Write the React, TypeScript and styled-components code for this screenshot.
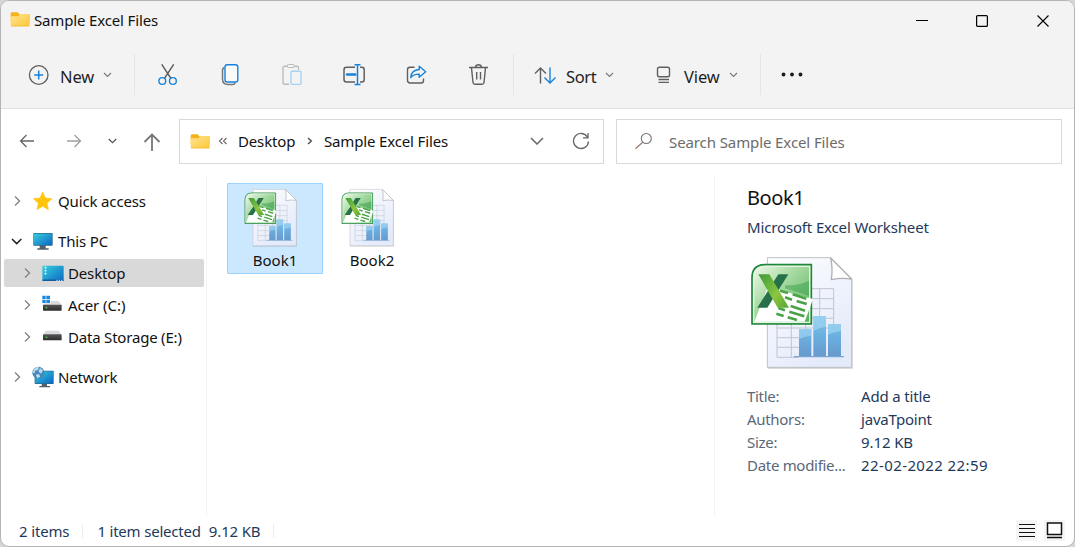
import React from "react";
import styled, { createGlobalStyle } from "styled-components";

const Global = createGlobalStyle`
  * { box-sizing: border-box; }
  body { margin: 0; background: #d6d6d6; overflow: hidden; }
`;

const Window = styled.div`
  width: 1075px;
  height: 547px;
  display: flex;
  flex-direction: column;
  background: #fff;
  border: 1px solid #b4b4b4;
  border-radius: 9px;
  overflow: hidden;
  font-family: "Noto Sans", "Open Sans", sans-serif;
  font-size: 15px;
  line-height: 20px;
  color: #111;
`;

const Label = styled.span<{ $ls?: number; $size?: number; $color?: string; $w?: number; $drop?: number }>`
  display: block;
  flex: none;
  white-space: nowrap;
  width: ${(p) => (p.$w ? `${p.$w}px` : "auto")};
  font-size: ${(p) => p.$size ?? 15}px;
  letter-spacing: ${(p) => p.$ls ?? -0.15}px;
  color: ${(p) => p.$color ?? "inherit"};
  padding-top: ${(p) => p.$drop ?? 0}px;
`;

const Svg = styled.svg<{ $ml?: number }>`
  display: block;
  flex: none;
  fill: none;
  margin-left: ${(p) => p.$ml ?? 0}px;
`;

const Inset = styled.div<{ $ml: number }>`
  flex: none;
  margin-left: ${(p) => p.$ml}px;
`;

type Box = [number, number, number, number];
const Glyph = ({ box, scale = 1, ml, children }: { box: Box; scale?: number; ml?: number; children: React.ReactNode }) => (
  <Svg $ml={ml} width={box[2] * scale} height={box[3] * scale} viewBox={box.join(" ")}>
    {children}
  </Svg>
);

const TitleBar = styled.header`
  display: flex;
  align-items: center;
  height: 39px;
  padding-left: 9px;
  background: #f3f3f3;
  color: #111;
`;
const Title = styled.div`
  display: flex;
  align-items: center;
  gap: 4px;
  flex: 1;
  padding-bottom: 2px;
`;
const CaptionButton = styled.div<{ $w?: number }>`
  width: ${(p) => p.$w ?? 60}px;
  height: 38px;
  display: grid;
  place-items: center;
`;

const Toolbar = styled.div`
  display: flex;
  align-items: center;
  height: 69px;
  background: #f3f3f3;
  border-bottom: 1px solid #e1e1e1;
  padding-top: 1px;
  color: #1f1f1f;
`;
const Command = styled.div<{ $w: number; $pl: number; $gap: number }>`
  display: flex;
  align-items: center;
  flex: none;
  width: ${(p) => p.$w}px;
  padding-left: ${(p) => p.$pl}px;
  gap: ${(p) => p.$gap}px;
`;
const IconButton = styled.div`
  width: 62px;
  display: grid;
  place-items: center;
`;
const Divider = styled.div<{ $mx?: string }>`
  width: 1px;
  height: 41px;
  background: #e5e5e5;
  margin: ${(p) => p.$mx ?? "0"};
`;

const NavRow = styled.div`
  display: flex;
  align-items: center;
  height: 66px;
  padding: 0 0 2px 10px;
`;
const Field = styled.div<{ $w: number; $mr?: number }>`
  display: flex;
  align-items: center;
  flex: none;
  width: ${(p) => p.$w}px;
  height: 45px;
  margin-right: ${(p) => p.$mr ?? 0}px;
  border: 1px solid #d9d9d9;
`;
const NavButton = styled.div<{ $w: number; $ml?: number }>`
  width: ${(p) => p.$w}px;
  margin-left: ${(p) => p.$ml ?? 0}px;
  display: grid;
  place-items: center;
`;

const Body = styled.div`
  display: flex;
  height: 341px;
`;
const Sidebar = styled.nav`
  width: 206px;
  border-right: 1px solid #f3f3f3;
  padding: 12px 2px 0 3px;
  display: flex;
  flex-direction: column;
  gap: 4px;
`;
const TreeRow = styled.div<{ $depth?: number; $selected?: boolean; $gap?: boolean }>`
  display: flex;
  align-items: center;
  height: 28px;
  padding-left: ${(p) => (p.$depth ? 18 : 8)}px;
  margin-top: ${(p) => (p.$gap ? 8 : 0)}px;
  border-radius: 2px;
  background: ${(p) => (p.$selected ? "#d9d9d9" : "transparent")};
`;
const TreeIcon = styled.div`
  width: 24px;
  margin-left: 8.5px;
  margin-right: 3.5px;
  display: flex;
  justify-content: center;
`;

const Files = styled.main`
  display: flex;
  gap: 1px;
  align-items: flex-start;
  width: 508px;
  padding: 8px 0 0 20px;
  border-right: 1px solid #f3f3f3;
`;
const FileTile = styled.div<{ $selected?: boolean }>`
  width: 96px;
  height: 91px;
  display: flex;
  flex-direction: column;
  align-items: center;
  padding-top: 4px;
  border-radius: 1px;
  border: 1px solid ${(p) => (p.$selected ? "#99d1ff" : "transparent")};
  background: ${(p) => (p.$selected ? "#cce8ff" : "transparent")};
`;
const FileArt = styled.div`
  margin-right: 8px;
  height: 62px;
`;

const Details = styled.aside`
  flex: 1;
  padding: 10px 0 0 32px;
`;
const Preview = styled.div`
  padding: 18px 0 14px 3px;
`;
const Property = styled.div`
  display: flex;
  height: 23px;
  align-items: center;
`;

const StatusBar = styled.footer`
  display: flex;
  align-items: center;
  height: 30px;
  padding: 0 2px 0 18px;
  color: #1e395b;
`;
const StatusDivider = styled.div<{ $m: string }>`
  width: 1px;
  height: 14px;
  background: #ededed;
  margin: ${(p) => p.$m};
`;
const ViewToggle = styled.div`
  width: 21px;
  height: 21px;
  margin-right: 7px;
  margin-bottom: 2px;
  background: #f5f5f5;
  display: grid;
  place-items: center;
`;
const Spacer = styled.div`
  flex: 1;
`;

const Defs = styled.svg`
  display: block;
  width: 0;
  height: 0;
`;
const Gradients = () => (
  <Defs>
    <defs>
      <linearGradient id="folder" x1="0" y1="0" x2="1" y2="1">
        <stop offset="0" stopColor="#ffe395" /><stop offset="1" stopColor="#fdc934" />
      </linearGradient>
      <linearGradient id="screen" x1="0" y1="0" x2="1" y2="1">
        <stop offset="0" stopColor="#36cfdc" /><stop offset="1" stopColor="#0c66c4" />
      </linearGradient>
      <linearGradient id="disk" x1="0" y1="0" x2="0" y2="1">
        <stop offset="0" stopColor="#555" /><stop offset="1" stopColor="#2c2c2c" />
      </linearGradient>
      <linearGradient id="page" x1="0" y1="0" x2="0.6" y2="1">
        <stop offset="0" stopColor="#ffffff" /><stop offset="0.45" stopColor="#f2f5fd" /><stop offset="1" stopColor="#e3eafa" />
      </linearGradient>
      <linearGradient id="sheet" x1="0" y1="0" x2="1" y2="1">
        <stop offset="0" stopColor="#f4fbf1" /><stop offset="0.4" stopColor="#a8dba2" /><stop offset="1" stopColor="#4fae55" />
      </linearGradient>
      <linearGradient id="bar" x1="0" y1="0" x2="0" y2="1">
        <stop offset="0" stopColor="#7dc3ea" /><stop offset="0.5" stopColor="#6bafdf" /><stop offset="1" stopColor="#6699cc" />
      </linearGradient>
      <linearGradient id="cross" x1="0" y1="0" x2="1" y2="1">
        <stop offset="0" stopColor="#3c9a3a" /><stop offset="0.6" stopColor="#8cc63f" /><stop offset="1" stopColor="#55a636" />
      </linearGradient>
    </defs>
  </Defs>
);

const FolderIcon = () => (
  <Glyph box={[28, 32, 60, 50]} scale={1 / 3}>
    <path d="M30 40q0-4 4-4h17l5 6h28q3 0 3 3v20H30z" fill="#f5b31a" />
    <path d="M30 48h23l6-7h25q3 0 3 3v31q0 3-3 3H33q-3 0-3-3z" fill="url(#folder)" />
    <path d="M31 77h55" stroke="#f1b52b" strokeWidth="2" />
  </Glyph>
);

const SmallChevron = () => (
  <Glyph box={[0, 0, 9, 6]}><path d="M1 1l3.5 3.4L8 1" stroke="#777" strokeWidth="1.1" /></Glyph>
);
const TreeChevron = ({ open }: { open?: boolean }) =>
  open ? (
    <Glyph box={[0, 0, 11, 12]} ml={-1}><path d="M1 4l4.7 4.6L10.400 4" stroke="#222" strokeWidth="1.5" /></Glyph>
  ) : (
    <Glyph box={[0, 0, 10, 12]}><path d="M3 1.500L7.500 6l-4.500 4.500" stroke="#858585" strokeWidth="1.4" /></Glyph>
  );

const Monitor = () => (
  <Glyph box={[98, 168, 60, 56]} scale={1 / 3}>
    <path d="M118 207h18v10h9v4h-34v-4h7z" fill="#546069" />
    <rect x="99" y="171" width="58" height="38" rx="2" fill="#27698c" />
    <rect x="101" y="173" width="54" height="34" fill="url(#screen)" />
  </Glyph>
);
const DesktopIcon = () => (
  <Glyph box={[125, 268, 66, 50]} scale={1 / 3}>
    <rect x="126" y="270" width="64" height="48" rx="3" fill="url(#screen)" />
    <path d="M133 276h5m-5 9h5m-5 9h5" stroke="#e8feff" strokeWidth="5" />
    <path d="M127 314h62" stroke="#115a9e" strokeWidth="5" />
    <path d="M168 314h4m3 0h4m3 0h4" stroke="#d6ebff" strokeWidth="3" />
  </Glyph>
);
const Drive = ({ windows }: { windows?: boolean }) => (
  <Glyph box={[127, 358, 62, 60]} scale={1 / 3}>
    <g transform={windows ? "translate(0 -2)" : "translate(0 -9)"}>
      <path d="M139 378h38l9 12h-56z" fill="#d9dadd" />
      <rect x="130" y="389" width="56" height="18" rx="2" fill="url(#disk)" />
      <path d="M138 398h5" stroke="#45d84d" strokeWidth="4" />
    </g>
    {windows && <rect x="127" y="358" width="26" height="25" fill="#fff" />}
    {windows && <path d="M128 360h10v10h-10zM140 360h11v10h-11zM128 372h10v10h-10zM140 372h11v10h-11z" fill="#1588df" />}
  </Glyph>
);
const NetworkIcon = () => (
  <Glyph box={[95, 571, 66, 66]} scale={1 / 3}>
    <path d="M124 623h16v8h9v4h-32v-4h7z" fill="#51616c" />
    <rect x="103" y="585" width="57" height="40" rx="2" fill="#24688b" />
    <rect x="105" y="587" width="53" height="36" fill="url(#screen)" />
    <circle cx="114" cy="591" r="18" fill="#4386bb" />
    <path d="M101 580q8-8 15-5l-3 8-8 2-2 8-6-2zM119 577l9 7-5 10-9-6zM106 597l10-2 4 8-9 5z" fill="#b8d9e9" />
  </Glyph>
);
const Star = () => (
  <Glyph box={[98, 48, 58, 58]} scale={1 / 3}>
    <path d="M127 51l8 18 20 2-15 14 4 19-17-10-17 10 4-19-15-14 20-2z" fill="#ffc50d" stroke="#ffc50d" strokeWidth="2" strokeLinejoin="round" />
  </Glyph>
);

const ExcelFile = ({ scale }: { scale: number }) => (
  <Glyph box={[45, 240, 312, 345]} scale={scale / 3}>
    <path d="M99 251H289L353 316V581H99z" fill="#777" opacity=".35" />
    <path d="M97 248H287L350 312V577H97z" fill="url(#page)" stroke="#bfc1c5" strokeWidth="3" />
    <path d="M287 249L350 312q-32-5-61 2 5-35-2-65z" fill="#fff" stroke="#aeb0b3" strokeWidth="4" strokeLinejoin="round" />
    <path d="M126 341H296M126 371H296M126 401H296M126 430H296M126 459H296M126 488H200M126 517H200M126 547H190M126 440V547M169 440V547M212 341V547M254 341V430M296 341V450" stroke="#c0c4d2" strokeWidth="3" />
    <path d="M192 463h37v82h-37zM235 423h38v122h-38zM279 447h39v98h-39z" fill="url(#bar)" />
    <path d="M192 463h37v20q-20 0-37 9zM235 423h38v32q-20 3-38 13zM279 447h39v21q-22 3-39 11z" fill="#a6d9f4" opacity=".6" />
    <path d="M177 545H327" stroke="#7aa5d2" strokeWidth="4" />
    <path d="M51 447V309q0-40 40-40H229V447z" fill="url(#sheet)" stroke="#20863b" strokeWidth="5" />
    <path d="M56 442V311q0-37 37-37H224V442z" stroke="#e5f5e2" strokeWidth="4" />
    <path d="M150 331q46 0 72-14v45l-72-22z" fill="#2e9c45" opacity=".45" />
    <path d="M58 440l40-103 136 35-25 68z" fill="#fff" />
    <path d="M135 347l24 7m14 4l41 13M150 367l21 7m14 4l30 9M135 383l19 6m13 4l43 14M130 399l20 7m13 4l45 14M124 416l22 7m12 4l28 8" stroke="#4aa447" strokeWidth="8" />
    <path d="M130 298h30L97 398H67z" fill="#27714a" />
    <path d="M70 298h33l59 100h-34z" fill="url(#cross)" />
  </Glyph>
);

const dark = "#5f5f5f";
const blue = "#1682da";

const properties: [string, string, number][] = [
  ["Title:", "Add a title", -0.15],
  ["Authors:", "javaTpoint", -0.2],
  ["Size:", "9.12 KB", -0.1],
  ["Date modifie...", "22-02-2022 22:59", 0.4],
];

export default function App() {
  return (
    <>
      <Global />
      <Gradients />
      <Window>
        <TitleBar>
          <Title>
            <FolderIcon />
            <Label>Sample Excel Files</Label>
          </Title>
          <CaptionButton><Glyph box={[0, 0, 12, 12]}><path d="M0 5.500h12" stroke="#000" /></Glyph></CaptionButton>
          <CaptionButton><Glyph box={[0, 0, 12, 12]}><rect x=".6" y=".6" width="10.800" height="10.800" rx="1" stroke="#000" strokeWidth="1.200" /></Glyph></CaptionButton>
          <CaptionButton $w={62}><Glyph box={[0, 0, 12, 12]}><path d="M.5.5l11 11M11.500.5l-11 11" stroke="#000" strokeWidth="1.100" /></Glyph></CaptionButton>
        </TitleBar>

        <Toolbar>
          <Command $w={133} $pl={27} $gap={11}>
            <Glyph box={[28, 64, 21, 22]}>
              <circle cx="38.700" cy="75" r="9.300" stroke={dark} strokeWidth="1.300" />
              <path d="M38.700 70.500v9M34.200 75h9" stroke={blue} strokeWidth="1.500" />
            </Glyph>
            <Label $size={16.5} $ls={-0.1} $drop={5} $w={32}>New</Label>
            <SmallChevron />
          </Command>
          <Divider $mx="0 2px 0 0" />
          <IconButton>
            <Glyph box={[157, 64, 22, 22]}>
              <path d="M161.700 64.300l9.300 14.200M173.700 64.300l-9.300 14.200" stroke={dark} strokeWidth="1.400" />
              <circle cx="162.300" cy="81" r="3.400" stroke={blue} strokeWidth="1.400" />
              <circle cx="172.900" cy="81" r="3.400" stroke={blue} strokeWidth="1.400" />
            </Glyph>
          </IconButton>
          <IconButton>
            <Glyph box={[219, 64, 22, 22]}>
              <path d="M224.500 67.500q-2 .5-2 3v8.500q0 5.500 5.500 5.500h4.500q2 0 2.700-1.800" stroke="#777" strokeWidth="1.500" />
              <rect x="225" y="64.700" width="12.800" height="17.300" rx="2.200" fill="#fafafa" stroke={blue} strokeWidth="1.400" />
            </Glyph>
          </IconButton>
          <IconButton>
            <Glyph box={[281, 64, 22, 22]}>
              <path d="M289 84.300h-4.500q-1.500 0-1.500-1.500v-15q0-1.500 1.500-1.500h3M294.500 66.300h2.500q1.500 0 1.500 1.500v2" stroke="#bcbcbc" strokeWidth="1.400" />
              <rect x="287" y="64.500" width="7.500" height="3" rx="1.500" stroke="#bcbcbc" />
              <rect x="291" y="71.200" width="10" height="13.200" rx="1.200" stroke="#a8d2f2" strokeWidth="1.400" />
            </Glyph>
          </IconButton>
          <IconButton>
            <Glyph box={[343, 64, 23, 22]}>
              <path d="M355 67.200h-8.500q-2.500 0-2.500 2.500v9.800q0 2.500 2.500 2.500h8.500M360 67.200h1.700q2.500 0 2.500 2.500v9.800q0 2.500-2.500 2.500H360" stroke={dark} strokeWidth="1.500" />
              <path d="M347 74.500h8.300" stroke={blue} strokeWidth="2.400" strokeLinecap="round" />
              <path d="M354.500 64.700h6M354.500 84.500h6M357.500 65v19" stroke={blue} strokeWidth="1.500" />
            </Glyph>
          </IconButton>
          <IconButton>
            <Glyph box={[405, 64, 22, 22]}>
              <path d="M414.500 67.300H410q-2.500 0-2.500 2.500v10.500q0 2.700 2.700 2.700H421q2.500 0 2.500-2.500v-2" stroke={dark} strokeWidth="1.400" />
              <path d="M419.200 66.300l6.500 5.500-6.500 5.500v-3.200q-5.300-.2-8.500 3.400.7-7.500 8.500-8z" stroke={blue} strokeWidth="1.400" strokeLinejoin="round" />
            </Glyph>
          </IconButton>
          <IconButton>
            <Glyph box={[467, 63, 23, 23]}>
              <path d="M469 67.500h19M475.500 67q.4-2.300 3-2.300t3 2.300M471.500 68l1.500 14.500q.2 1.800 2 1.800h7q1.800 0 2-1.800l1.500-14.500M476.700 72v7.500M480.500 72v7.500" stroke={dark} strokeWidth="1.400" />
            </Glyph>
          </IconButton>
          <Divider $mx="0 0 0 4px" />
          <Command $w={138} $pl={20} $gap={9}>
            <Glyph box={[534, 66, 23, 18]}>
              <path d="M540.500 83.500V68M535 73.500l5.500-5.500 5.500 5.500" stroke={dark} strokeWidth="1.400" />
              <path d="M550 67.500V83M544.500 77.500L550 83l5.500-5.500" stroke={blue} strokeWidth="1.400" />
            </Glyph>
            <Label $size={16.5} $ls={-0.35} $drop={5} $w={30}>Sort</Label>
            <SmallChevron />
          </Command>
          <Command $w={108} $pl={3} $gap={12}>
            <Glyph box={[655, 67, 17, 18]}>
              <rect x="657.500" y="68.200" width="12" height="9.600" rx="1.800" stroke={dark} strokeWidth="1.400" />
              <path d="M658.500 80.500h10.500M658.500 83.300h10.500" stroke={dark} strokeWidth="1.300" />
            </Glyph>
            <Label $size={16.5} $ls={-0.1} $drop={5} $w={33}>View</Label>
            <SmallChevron />
          </Command>
          <Divider />
          <Command $w={60} $pl={19} $gap={0}>
            <Glyph box={[780, 72, 24, 5]}>
              <g fill="#1d1d1d"><circle cx="783.500" cy="74.500" r="1.900" /><circle cx="792" cy="74.500" r="1.900" /><circle cx="800.500" cy="74.500" r="1.900" /></g>
            </Glyph>
          </Command>
        </Toolbar>

        <NavRow>
          <NavButton $w={32}><Glyph box={[19, 134, 16, 14]}><path d="M34 141H20.500M26.500 135l-6 6 6 6" stroke="#666" strokeWidth="1.300" /></Glyph></NavButton>
          <NavButton $w={62}><Glyph box={[66, 134, 16, 14]}><path d="M67 141h13.500M74.500 135l6 6-6 6" stroke="#a0a0a0" strokeWidth="1.300" /></Glyph></NavButton>
          <NavButton $w={15}><Glyph box={[0, 0, 9, 6]}><path d="M.8 1l3.700 3.600L8.200 1" stroke="#555" strokeWidth="1.300" /></Glyph></NavButton>
          <NavButton $w={54} $ml={5}><Glyph box={[143, 132, 18, 19]}><path d="M152 151v-16.500M144.500 142l7.500-7.500 7.500 7.500" stroke="#777" strokeWidth="1.800" /></Glyph></NavButton>
          <Field $w={425} $mr={12}>
            <Inset $ml={10}><FolderIcon /></Inset>
            <Glyph box={[0, 0, 10, 8]} ml={8}><path d="M4.500 1l-3 3 3 3M8.500 1l-3 3 3 3" stroke="#666" strokeWidth="1.100" /></Glyph>
            <Inset $ml={10}><Label $w={69}>Desktop</Label></Inset>
            <Glyph box={[0, 0, 6, 8]}><path d="M1 1l3.300 3L1 7" stroke="#555" strokeWidth="1.500" /></Glyph>
            <Inset $ml={11}><Label $w={206}>Sample Excel Files</Label></Inset>
            <Glyph box={[0, 0, 14, 8]}><path d="M1 1l6 6 6-6" stroke="#666" strokeWidth="1.500" /></Glyph>
            <Glyph box={[572, 132, 18, 18]} ml={28}>
              <path d="M587.500 137.200a7.500 7.500 0 1 0 1 4.300M588 133v4.800h-5" stroke="#666" strokeWidth="1.300" />
            </Glyph>
          </Field>
          <Field $w={446}>
            <Glyph box={[634, 132, 19, 19]} ml={17}>
              <circle cx="646.300" cy="138.500" r="5" stroke="#73757d" strokeWidth="1.100" />
              <path d="M642.700 142.300l-7.200 6.500" stroke="#9b7b6b" strokeWidth="1.200" />
            </Glyph>
            <Inset $ml={16}><Label $color="#6b6b6b" $ls={-0.1} $drop={2}>Search Sample Excel Files</Label></Inset>
          </Field>
        </NavRow>

        <Body>
          <Sidebar>
            <TreeRow><TreeChevron /><TreeIcon><Star /></TreeIcon><Label>Quick access</Label></TreeRow>
            <TreeRow $gap><TreeChevron open /><TreeIcon><Monitor /></TreeIcon><Label>This PC</Label></TreeRow>
            <TreeRow $depth={1} $selected><TreeChevron /><TreeIcon><DesktopIcon /></TreeIcon><Label>Desktop</Label></TreeRow>
            <TreeRow $depth={1}><TreeChevron /><TreeIcon><Drive windows /></TreeIcon><Label $ls={-0.05}>Acer (C:)</Label></TreeRow>
            <TreeRow $depth={1}><TreeChevron /><TreeIcon><Drive /></TreeIcon><Label $ls={-0.2}>Data Storage (E:)</Label></TreeRow>
            <TreeRow $gap><TreeChevron /><TreeIcon><NetworkIcon /></TreeIcon><Label>Network</Label></TreeRow>
          </Sidebar>
          <Files>
            <FileTile $selected><FileArt><ExcelFile scale={0.515} /></FileArt><Label $ls={0}>Book1</Label></FileTile>
            <FileTile><FileArt><ExcelFile scale={0.515} /></FileArt><Label $ls={0}>Book2</Label></FileTile>
          </Files>
          <Details>
            <Label $size={20} $ls={-0.4} $drop={3}>Book1</Label>
            <Label $color="#1e395b" $drop={9}>Microsoft Excel Worksheet</Label>
            <Preview><ExcelFile scale={1} /></Preview>
            {properties.map(([name, value, spacing]) => (
              <Property key={name}>
                <Label $w={114} $ls={-0.3} $color="#5a6779">{name}</Label>
                <Label $ls={spacing} $color="#1e395b">{value}</Label>
              </Property>
            ))}
          </Details>
        </Body>

        <StatusBar>
          <Label>2 items</Label>
          <StatusDivider $m="0 14px 0 13px" />
          <Label $ls={-0.2}>1 item selected</Label>
          <Inset $ml={8}><Label>9.12 KB</Label></Inset>
          <StatusDivider $m="0 0 0 13px" />
          <Spacer />
          <ViewToggle><Glyph box={[0, 0, 16, 15]}><path d="M0 1.500h16M0 5.500h16M0 9.500h16M0 13.500h16" stroke="#111" strokeWidth="1.200" /></Glyph></ViewToggle>
          <ViewToggle><Glyph box={[0, 0, 17, 17]}><rect x="1.500" y="1" width="14" height="11.500" fill="#fff" stroke="#111" strokeWidth="1.500" /><path d="M1 15.500h15" stroke="#111" strokeWidth="1.300" /></Glyph></ViewToggle>
        </StatusBar>
      </Window>
    </>
  );
}
